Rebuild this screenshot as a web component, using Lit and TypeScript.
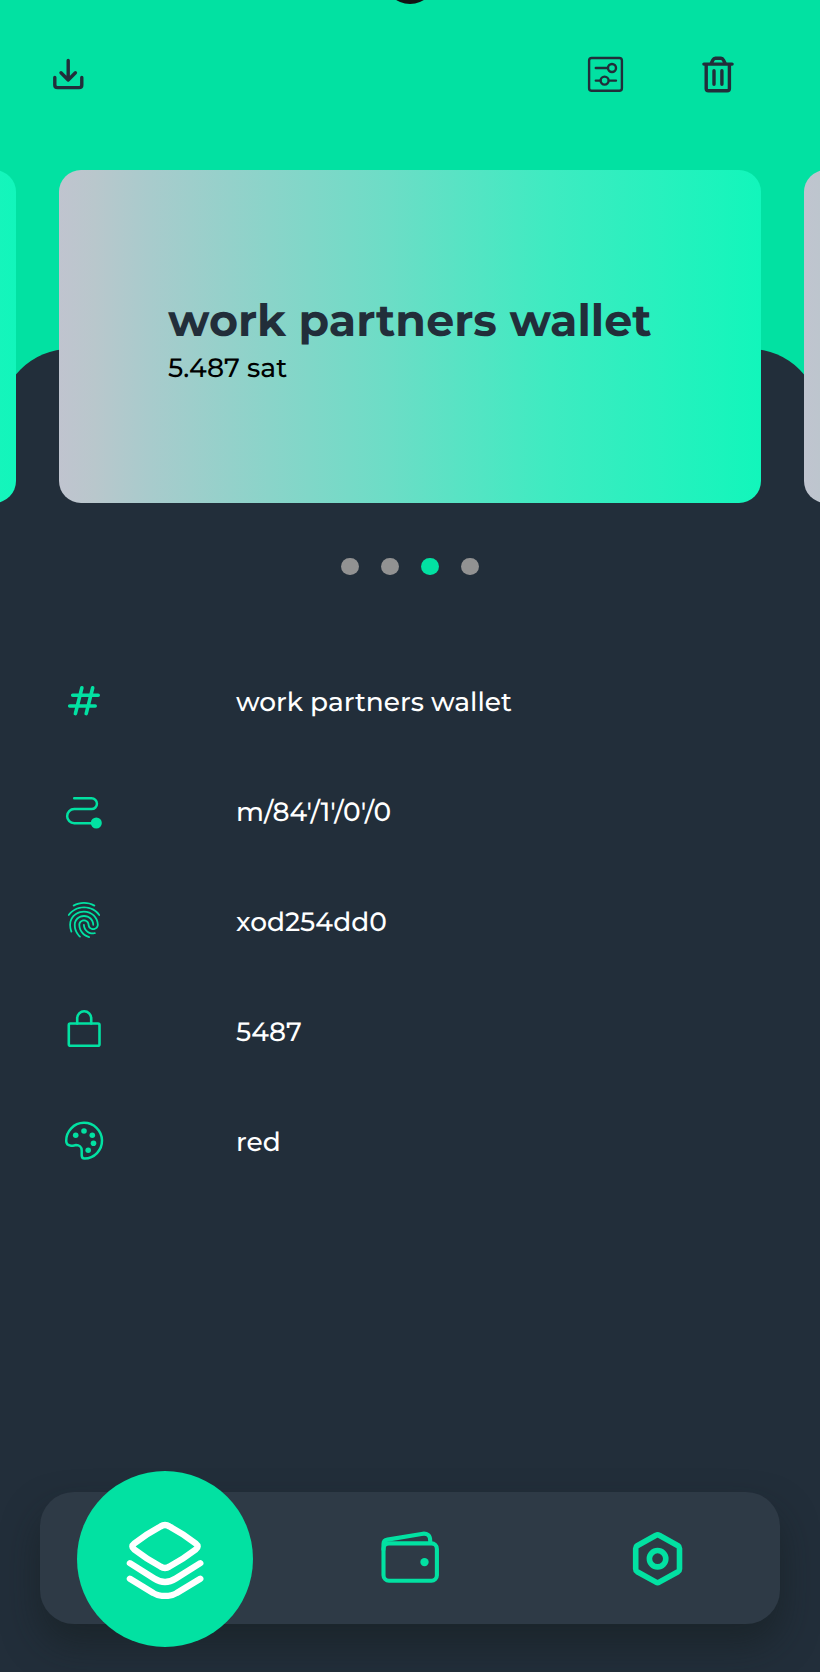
import { LitElement, html, css, svg } from "lit";
import { customElement, property } from "lit/decorators.js";
import { classMap } from "lit/directives/class-map.js";

const FINGERPRINT =
  "M17.81,4.47C17.73,4.47 17.65,4.45 17.58,4.41C15.66,3.42 14,3 12,3C10.03,3 8.15,3.47 6.44,4.41C6.2,4.54 5.9,4.45 5.76,4.21C5.63,3.97 5.72,3.66 5.96,3.53C7.82,2.5 9.86,2 12,2C14.14,2 16,2.47 18.04,3.5C18.29,3.65 18.38,3.95 18.25,4.19C18.16,4.37 18,4.47 17.81,4.47M3.5,9.72C3.4,9.72 3.3,9.69 3.21,9.63C3,9.47 2.93,9.16 3.09,8.93C4.08,7.53 5.34,6.43 6.84,5.66C10,4.04 14,4.03 17.15,5.65C18.65,6.42 19.91,7.5 20.9,8.9C21.06,9.12 21,9.44 20.78,9.6C20.55,9.76 20.24,9.71 20.08,9.5C19.18,8.22 18.04,7.23 16.69,6.54C13.82,5.07 10.15,5.07 7.29,6.55C5.93,7.25 4.79,8.25 3.89,9.5C3.81,9.65 3.66,9.72 3.5,9.72M9.75,21.79C9.62,21.79 9.5,21.74 9.4,21.64C8.53,20.77 8.06,20.21 7.39,19C6.7,17.77 6.34,16.27 6.34,14.66C6.34,11.69 8.88,9.27 12,9.27C15.12,9.27 17.66,11.69 17.66,14.66A0.5,0.5 0 0,1 17.16,15.16A0.5,0.5 0 0,1 16.66,14.66C16.66,12.24 14.57,10.27 12,10.27C9.43,10.27 7.34,12.24 7.34,14.66C7.34,16.1 7.66,17.43 8.27,18.5C8.91,19.66 9.35,20.15 10.12,20.93C10.31,21.13 10.31,21.44 10.12,21.64C10,21.74 9.88,21.79 9.75,21.79M16.92,19.94C15.73,19.94 14.68,19.64 13.82,19.05C12.33,18.04 11.44,16.4 11.44,14.66A0.5,0.5 0 0,1 11.94,14.16A0.5,0.5 0 0,1 12.44,14.66C12.44,16.07 13.16,17.4 14.38,18.22C15.09,18.7 15.92,18.93 16.92,18.93C17.16,18.93 17.56,18.9 17.96,18.83C18.23,18.78 18.5,18.96 18.54,19.24C18.59,19.5 18.41,19.77 18.13,19.82C17.56,19.93 17.06,19.94 16.92,19.94M14.91 22c-.04 0-.09-.01-.13-.02-1.59-.44-2.63-1.03-3.72-2.1-1.4-1.39-2.17-3.24-2.17-5.22 0-1.62 1.38-2.94 3.08-2.94 1.7 0 3.08 1.32 3.08 2.94 0 1.07.93 1.94 2.08 1.94s2.08-.87 2.08-1.94c0-3.77-3.25-6.83-7.25-6.83-2.84 0-5.44 1.58-6.61 4.03-.39.81-.59 1.76-.59 2.8 0 .78.07 2.01.67 3.61.1.26-.03.55-.29.64-.26.1-.55-.04-.64-.29-.49-1.31-.73-2.61-.73-3.96 0-1.2.23-2.29.68-3.24 1.33-2.79 4.28-4.6 7.51-4.6 4.55 0 8.25 3.51 8.25 7.83 0 1.62-1.38 2.94-3.08 2.94s-3.08-1.32-3.08-2.94c0-1.07-.93-1.94-2.08-1.94s-2.08.87-2.08 1.94c0 1.71.66 3.31 1.87 4.51.95.94 1.86 1.46 3.27 1.85.27.07.42.35.35.61-.05.23-.26.38-.47.38z";

/* Each glyph: viewBox, natural width, natural height, stroke width, shapes. */
const GLYPHS: Record<string, { box: string; w: number; h: number; sw: number; art: unknown }> = {
  download: {
    box: "50 56.5 36 38", w: 36, h: 38, sw: 3.4,
    art: svg`<path d="M68.2 60.9V80.5M61 73.3l7.2 7.2 7.2-7.2M54.8 78v7.4q0 2.7 2.7 2.7h21.6q2.7 0 2.7-2.7V78"/>`,
  },
  sliders: {
    box: "586 55 40 40", w: 40, h: 40, sw: 2.4,
    art: svg`<rect x="589.1" y="58" width="32.8" height="32.8" rx="2.6"/><path d="M595.8 68h11.8M595.8 80.6h4.6M609 80.6h7"/><circle cx="612" cy="68" r="4"/><circle cx="604.6" cy="80.6" r="4"/>`,
  },
  trash: {
    box: "700 54.5 36 40", w: 36, h: 40, sw: 3.4,
    art: svg`<path d="M703.9 63.6h28.2M711 63.2l2-3.8q.8-1.6 2.4-1.6h5.6q1.6 0 2.4 1.6l2 3.8M706.2 63.6V88q0 2.3 2.3 2.3h18.6q2.3 0 2.3-2.3V63.6M714 70.2v13.6M721.9 70.2v13.6"/>`,
  },
  hash: {
    box: "64 681 40 40", w: 40, h: 40, sw: 3.6,
    art: svg`<path d="M72.7 695.2h25.5M69.7 706h25.5M81.9 687.8l-6.5 25.8M92.7 687.8l-6.5 25.8"/>`,
  },
  route: {
    box: "64 791 40 40", w: 40, h: 40, sw: 2.5,
    art: svg`<path d="M74.2 798.2H91.5a5.4 5.4 0 0 1 0 10.9H74.2a7 7 0 0 0 0 14.1H93"/><circle class="fill" cx="96.3" cy="823" r="5.5"/>`,
  },
  fingerprint: {
    box: "0.85 1.4 22.3 22.3", w: 40, h: 40, sw: 0,
    art: svg`<path class="fill" d=${FINGERPRINT} />`,
  },
  lock: {
    box: "64 1009 40 44", w: 40, h: 44, sw: 2.6,
    art: svg`<rect x="68.8" y="1023.5" width="30.7" height="22.2" rx="1.5"/><path d="M77.2 1023.5V1018.3a7 7 0 0 1 14 0V1023.5"/>`,
  },
  palette: {
    box: "64 1121 40 40", w: 40, h: 40, sw: 2.5,
    art: svg`<path d="M66.2 1141A17.9 17.9 0 1 1 84.5 1158.6C82.4 1158.6 81.7 1157.2 81.7 1155.2V1150.5C81.7 1147 79.2 1145.1 76 1145.1C74 1145.3 73.2 1145.9 71 1145.7C68 1145.4 66.2 1143.5 66.2 1141Z"/><g class="fill"><circle cx="75.7" cy="1135.2" r="2.8"/><circle cx="84" cy="1131" r="2.8"/><circle cx="92.3" cy="1135.2" r="2.8"/><circle cx="93.5" cy="1143.3" r="2.8"/><circle cx="88.2" cy="1150.2" r="2.8"/></g>`,
  },
  layers: {
    box: "124.3 1519 80 80", w: 80, h: 80, sw: 6.3,
    art: svg`<path d="M159.8 1526.5Q164.3 1523.6 168.8 1526.5Q182 1533.5 195 1543.5Q199 1546.5 195 1549.5Q182 1559.5 168.8 1566.5Q164.3 1569.4 159.8 1566.5Q146.5 1559.5 133.6 1549.5Q129.6 1546.5 133.6 1543.5Q146.5 1533.5 159.8 1526.5ZM129.2 1563.2L153.5 1578.5Q164.3 1585.5 175.1 1578.5L199.6 1563.2M129.2 1578.7L152.5 1593Q157 1596 164.3 1596T176.1 1593L199.6 1578.7"/>`,
  },
  wallet: {
    box: "380.5 1528.6 60 60", w: 60, h: 60, sw: 4.1,
    art: svg`<rect x="384" y="1544" width="53.4" height="37.3" rx="5.5"/><path d="M384 1550V1544.5Q384 1540.8 388 1540.2L422 1534.5Q430.7 1533 430.7 1541V1543.5"/><circle class="fill" cx="425" cy="1562.7" r="4.2"/>`,
  },
  hex: {
    box: "626.7 1528 60 60", w: 60, h: 60, sw: 5.6,
    art: svg`<path d="M655.7 1535.3Q657.3 1534.3 658.9 1535.3L677.7 1545.7Q679.2 1546.6 679.2 1548.4V1569Q679.2 1570.8 677.7 1571.7L658.9 1582.1Q657.3 1583.1 655.7 1582.1L636.9 1571.7Q635.4 1570.8 635.4 1569V1548.4Q635.4 1546.6 636.9 1545.7Z"/><circle cx="657.3" cy="1558.7" r="8.2"/>`,
  },
};

@customElement("app-icon")
export class AppIcon extends LitElement {
  @property() name = "hash";

  static styles = css`
    :host { display: inline-flex; color: inherit; flex: none; }
    svg { display: block; fill: none; stroke: currentColor; stroke-linecap: round; stroke-linejoin: round; }
    .fill { fill: currentColor; stroke: none; }
  `;

  render() {
    const g = GLYPHS[this.name];
    return html`<svg viewBox=${g.box} width=${g.w} height=${g.h} stroke-width=${g.sw}>${g.art}</svg>`;
  }
}

const DETAILS = [
  { icon: "hash", text: "work partners wallet" },
  { icon: "route", text: "m/84'/1'/0'/0" },
  { icon: "fingerprint", text: "xod254dd0" },
  { icon: "lock", text: "5487" },
  { icon: "palette", text: "red" },
];

@customElement("app-root")
export class AppRoot extends LitElement {
  static styles = css`
    :host {
      display: block;
      font-family: Montserrat, Inter, sans-serif;
      text-rendering: geometricPrecision;
      --mint: #02e1a2;
      --ink: #222e3a;
    }
    .screen {
      position: relative;
      display: flex;
      flex-direction: column;
      box-sizing: border-box;
      width: 820px;
      height: 1672px;
      overflow: hidden;
      background: linear-gradient(var(--mint) 0 500px, var(--ink) 500px);
    }
    .camera {
      position: absolute;
      left: 384px;
      top: -48px;
      width: 52px;
      height: 52px;
      border-radius: 50%;
      background: #111314;
    }
    .bar {
      display: flex;
      align-items: center;
      height: 149px;
      padding: 0 84px 0 50px;
      box-sizing: border-box;
      color: var(--ink);
    }
    .spacer { flex: 1; }
    .bar app-icon + app-icon { margin-left: 74px; }
    .sheet {
      flex: 1;
      display: flex;
      flex-direction: column;
      margin-top: 200px;
      border-radius: 70px 70px 0 0;
      background: var(--ink);
    }
    .track {
      display: flex;
      justify-content: center;
      gap: 43px;
      margin-top: -179px;
    }
    .card {
      flex: none;
      display: flex;
      flex-direction: column;
      align-items: flex-start;
      box-sizing: border-box;
      width: 702px;
      height: 332.5px;
      padding: 124px 0 0 109px;
      border-radius: 22px;
      background: linear-gradient(90deg, #c0c4cf 0%, #b9c7cc 5%, #a8cbcc 13%, #6cddc6 47%, #3eebc1 70%, #12f6bb 100%);
    }
    .title {
      font-size: 44.4px;
      font-weight: 700;
      line-height: 55px;
      color: var(--ink);
      white-space: nowrap;
    }
    .sum { font-size: 26.5px; line-height: 38px; color: #000; white-space: nowrap; font-weight: 500; }
    .dots { display: flex; justify-content: center; gap: 21.7px; margin-top: 55px; }
    .dot { width: 18px; height: 17.5px; border-radius: 50%; background: #929292; }
    .dot.on { background: var(--mint); }
    .list { display: flex; flex-direction: column; margin-top: 70.5px; }
    .row { display: flex; align-items: center; height: 110px; padding-left: 64px; gap: 132px; color: var(--mint); }
    .text { font-size: 26.4px; font-weight: 500; line-height: 36px; padding-top: 3px; color: #fff; white-space: nowrap; }
    .nav {
      display: grid;
      grid-template-columns: repeat(3, 1fr);
      place-items: center;
      margin: auto 40px 48.5px;
      height: 131.5px;
      border-radius: 34px;
      background: #2e3a46;
      color: var(--mint);
      box-shadow: 0 20px 36px rgba(20, 28, 28, 0.5);
    }
    .disc {
      display: grid;
      place-items: center;
      width: 176px;
      height: 176px;
      margin: -26px 0 -28px 3px;
      border-radius: 50%;
      background: var(--mint);
      color: #fff;
    }
  `;

  render() {
    return html`
      <div class="screen">
        <div class="camera"></div>
        <header class="bar">
          <app-icon name="download"></app-icon>
          <span class="spacer"></span>
          <app-icon name="sliders"></app-icon>
          <app-icon name="trash"></app-icon>
        </header>
        <main class="sheet">
          <section class="track">
            <div class="card"></div>
            <div class="card">
              <div class="title">work partners wallet</div>
              <div class="sum">5.487 sat</div>
            </div>
            <div class="card"></div>
          </section>
          <div class="dots">
            ${[0, 1, 2, 3].map((i) => html`<span class=${classMap({ dot: true, on: i === 2 })}></span>`)}
          </div>
          <div class="list">
            ${DETAILS.map(
              (d) => html`<div class="row"><app-icon name=${d.icon}></app-icon><span class="text">${d.text}</span></div>`
            )}
          </div>
          <nav class="nav">
            <div class="disc"><app-icon name="layers"></app-icon></div>
            <app-icon name="wallet"></app-icon>
            <app-icon name="hex"></app-icon>
          </nav>
        </main>
      </div>
    `;
  }
}
